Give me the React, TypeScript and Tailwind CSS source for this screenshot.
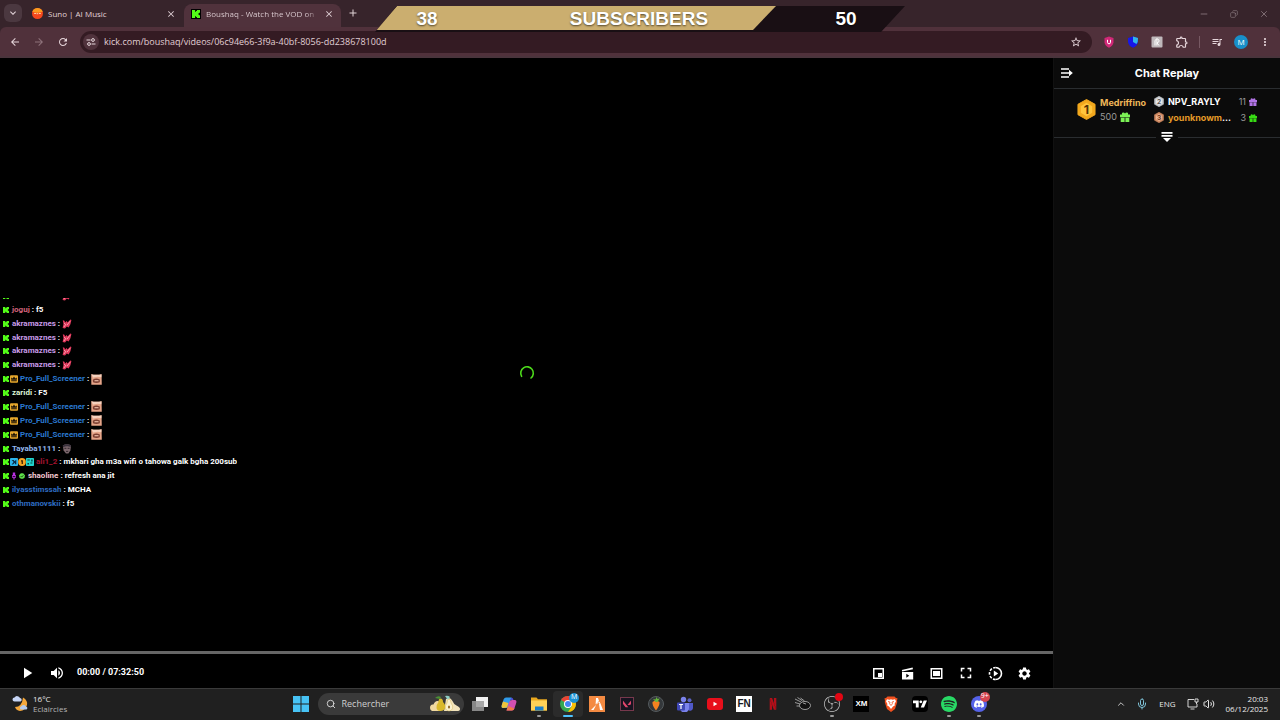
import type { ReactNode } from 'react';
import {
  SiDiscord,
  SiNetflix,
  SiObsstudio,
  SiSpotify,
  SiTradingview,
  SiValorant,
} from 'react-icons/si';
import {
  MdAdd,
  MdArrowBack,
  MdArrowForward,
  MdClose,
  MdExpandMore,
  MdFullscreen,
  MdMoreVert,
  MdOutlineExtension,
  MdOutlineQueueMusic,
  MdPlayArrow,
  MdRefresh,
  MdSettings,
  MdStarBorder,
  MdVolumeUp,
} from 'react-icons/md';
import { ChevronUp, Copy, Mic, Minus, Search, Volume2, X } from 'lucide-react';

type Badge = 'crown' | 'mod' | 'coin' | 'sub' | 'mic' | 'check';
type Emote = 'hands' | 'pig' | 'face';

interface ChatMessage {
  user: string;
  color: string;
  badges?: Badge[];
  text?: string;
  emote?: Emote;
}

const messages: ChatMessage[] = [
  { user: 'akramaznes', color: 'text-[#c79be8]', emote: 'hands' },
  { user: 'joguj', color: 'text-[#d4647c]', text: 'f5' },
  { user: 'akramaznes', color: 'text-[#c79be8]', emote: 'hands' },
  { user: 'akramaznes', color: 'text-[#c79be8]', emote: 'hands' },
  { user: 'akramaznes', color: 'text-[#c79be8]', emote: 'hands' },
  { user: 'akramaznes', color: 'text-[#c79be8]', emote: 'hands' },
  { user: 'Pro_Full_Screener', color: 'text-[#2a78cf]', badges: ['crown'], emote: 'pig' },
  { user: 'zaridi', color: 'text-[#dcf3d4]', text: 'F5' },
  { user: 'Pro_Full_Screener', color: 'text-[#2a78cf]', badges: ['crown'], emote: 'pig' },
  { user: 'Pro_Full_Screener', color: 'text-[#2a78cf]', badges: ['crown'], emote: 'pig' },
  { user: 'Pro_Full_Screener', color: 'text-[#2a78cf]', badges: ['crown'], emote: 'pig' },
  { user: 'Tayaba1111', color: 'text-[#93b8ee]', emote: 'face' },
  {
    user: 'ali1_2',
    color: 'text-[#a3132f]',
    badges: ['mod', 'coin', 'sub'],
    text: 'mkhari gha m3a wifi o tahowa galk bgha 200sub',
  },
  { user: 'shaoline', color: 'text-[#f3c9d2]', badges: ['mic', 'check'], text: 'refresh ana jit' },
  { user: 'ilyasstimssah', color: 'text-[#2e6cc2]', text: 'MCHA' },
  { user: 'othmanovskii', color: 'text-[#2e6cc2]', text: 'f5' },
];

function KickLogo({ className }: { className: string }) {
  return (
    <svg className={className} viewBox="0 0 9 9" fill="#53fc18">
      <path d="M0 0h3.500v2h1V1h1V0H9v3H8v1H7v1h1v1h1v3H5.500V8h-1V7h-1v2H0z" />
    </svg>
  );
}

function BadgeIcon({ type }: { type: Badge }) {
  switch (type) {
    case 'crown':
      return (
        <svg className="size-2" viewBox="0 0 8 8">
          <rect width="8" height="7.4" y=".3" rx="1" fill="#e9a92c" />
          <path d="M1.2 2.4l1.5 1L4 1.6l1.3 1.8 1.5-1v2.4H1.2zM1.2 5.2h5.6v1H1.2z" fill="#1a1206" />
        </svg>
      );
    case 'mod':
      return (
        <svg className="size-2" viewBox="0 0 8 8">
          <rect width="8" height="8" rx="1" fill="#2cb4ea" />
          <path d="M1.6 2h2.2l.6 1.3L6.3 1.8v4.5H5V4.8L3 6.4H1.6l2-2.4z" fill="#0c2c47" />
        </svg>
      );
    case 'coin':
      return (
        <svg className="size-2" viewBox="0 0 8 8">
          <circle cx="4" cy="4" r="3.9" fill="#f3a526" />
          <path d="M3 2.2h1.9v3.9H3.6V3.4H3z" fill="#3a1f02" />
        </svg>
      );
    case 'sub':
      return (
        <svg className="size-2" viewBox="0 0 8 8">
          <rect width="8" height="8" rx=".8" fill="#22d5cf" />
          <path d="M1.4 1.4h2.4v1.2H1.4zM5.2 1.4h1.4v2H5.2zM1.4 5h1.6v1.6H1.4zM4.4 4.6h2v1h-2z" fill="#06413f" />
        </svg>
      );
    case 'mic':
      return (
        <svg className="size-2" viewBox="0 0 8 8">
          <path d="M2.8.6h2.4v3.6H2.8zM2 3h.7v2h2.6V3H6v2.8H4.6v1.6H3.4V5.8H2z" fill="#b92fe0" />
        </svg>
      );
    case 'check':
      return (
        <svg className="size-2" viewBox="0 0 8 8">
          <path d="M4 1l.9.6 1.1.1.3 1 .8.8-.4 1 .1 1.1-1 .4-.8.9-1-.3-1 .3-.8-.9-1-.4.1-1.1-.4-1 .8-.8.3-1L3.1 1.6z" fill="#5fe04a" />
          <path d="M2.7 4.1l1 1 1.7-1.9" stroke="#0a2a06" strokeWidth=".8" fill="none" />
        </svg>
      );
  }
}

function EmoteIcon({ type }: { type: Emote }) {
  if (type === 'hands') {
    return (
      <svg className="size-2.5" viewBox="0 0 10 10">
        <path d="M.8 1.2l1.600.6.8 1.800L4.600 2l1 1.400L8.400.4l1 .6L8.400 5.200 6.600 8.600 4.800 7.400 3 9.600.6 9 1.500 5z" fill="#e0385c" />
        <path d="M2 4.200l1.200.800M5 6.200L8 2.200M2 8l2-3" stroke="#ffb0bd" strokeWidth=".8" />
      </svg>
    );
  }
  if (type === 'pig') {
    return (
      <svg className="size-[11px]" viewBox="0 0 10 10">
        <path d="M.2.3L2.4.7h5L9.6.3l.2 9.400H.3z" fill="#e5a488" />
        <path d="M.2.3L2.4.7h5L9.6.3 9.4 3 6 2.400 2 3.200z" fill="#f5d2bf" />
        <path d="M1.6 5.2q3-2 6.400-.2v2.400q-3 1.400-6.200 0z" fill="#7d4033" />
        <path d="M3.200 5.600h3.600v1H3.200z" fill="#f0c0ab" />
      </svg>
    );
  }
  return (
    <svg className="size-2.5" viewBox="0 0 10 10">
      <path d="M.8 1.5Q5-.8 9 1.4L8.4 6.4 6.4 9.6H4L1.6 6.6z" fill="#7c676d" />
      <path d="M.8 1.5Q5-.8 9 1.4L8.6 3Q5 1.4 1.2 3.2z" fill="#38303b" />
      <path d="M2.4 4.3h2M5.6 4.3h2M4 7.4h2.2" stroke="#1d161c" strokeWidth=".8" />
    </svg>
  );
}

function ChatOverlay() {
  return (
    <div className="absolute bottom-[140px] left-0 flex h-[213px] items-end overflow-hidden pl-[3px] text-[8px] font-bold text-white font-['Roboto',sans-serif]">
      <ul className="grid h-[222px] auto-rows-fr">
        {messages.map((m, i) => (
          <li key={i} className="flex items-center whitespace-pre">
            <KickLogo className="mr-px size-1.5" />
            {m.badges?.map((b) => <BadgeIcon key={b} type={b} />)}
            <span className={`${m.color} ml-0.5`}>{m.user}</span>
            <span> : {m.text}</span>
            {m.emote && <EmoteIcon type={m.emote} />}
          </li>
        ))}
      </ul>
    </div>
  );
}

function TabStrip() {
  return (
    <div className="flex h-[27px] items-end pl-1 text-[8px] text-[#e2d3d8]">
      <button aria-label="Search tabs" className="mb-[5px] flex size-[18px] items-center justify-center rounded-md bg-[#4b3840]">
        <MdExpandMore className="size-3" />
      </button>
      <div className="ml-2.5 flex h-[23px] w-[152px] items-center pb-1">
        <svg className="size-[11px]" viewBox="0 0 10 10">
          <circle cx="5" cy="5" r="5" fill="#f4471d" />
          <path d="M.3 3.400a5 5 0 019.400 0Q5 5.400.3 3.400z" fill="#fb9a1e" />
          <path d="M2 5h1.600M4.200 5.200h1.500M6.400 5h1.600" stroke="#ffd9a8" strokeWidth=".9" />
        </svg>
        <span className="ml-[5px] flex-1">Suno | AI Music</span>
        <button aria-label="Close Suno">
          <MdClose className="mr-2 size-2.5" />
        </button>
      </div>
      <div className="flex h-[23px] w-[157px] items-center rounded-t-lg bg-[#50323c] pb-1 pl-[7px]">
        <span className="flex size-2.5 items-center justify-center bg-black">
          <KickLogo className="size-2" />
        </span>
        <span className="ml-[5px] flex-1 overflow-hidden whitespace-nowrap bg-linear-to-r from-[#e2d3d8] from-90% to-[#e2d3d8]/20 bg-clip-text text-transparent">
          Boushaq - Watch the VOD on K
        </span>
        <button aria-label="Close Boushaq" className="mx-[7px]">
          <MdClose className="size-2.5" />
        </button>
      </div>
      <button aria-label="New tab" className="mb-2 ml-1.5">
        <MdAdd className="size-3" />
      </button>
      <div className="ml-auto flex items-center gap-[21px] pb-2 pr-[11px] text-[#8b7a80]">
        <button aria-label="Minimize"><Minus className="size-2.5" /></button>
        <button aria-label="Restore"><Copy className="size-2 rotate-90" /></button>
        <button aria-label="Close window"><X className="size-2.5" /></button>
      </div>
    </div>
  );
}

function Toolbar() {
  return (
    <div className="flex h-[31px] items-center rounded-t-md border-b-2 border-[#4a343c] bg-[#50313b] text-[#e6d6db]">
      <div className="flex w-20 items-center gap-3 pl-[9px]">
        <button aria-label="Back"><MdArrowBack className="size-3" /></button>
        <button aria-label="Forward" className="text-[#8e727b]"><MdArrowForward className="size-3" /></button>
        <button aria-label="Reload"><MdRefresh className="size-3" /></button>
      </div>
      <div className="flex h-[22px] flex-1 items-center rounded-full bg-[#341b23] pl-[3px] pr-2.5">
        <button aria-label="Site information" className="flex size-4 items-center justify-center rounded-full bg-[#50323c]">
          <svg className="size-2.5" viewBox="0 0 10 10" fill="none" stroke="currentColor" strokeWidth="1">
            <path d="M.5 3h4M5.500 7h4" />
            <circle cx="7" cy="3" r="1.400" />
            <circle cx="3" cy="7" r="1.400" />
          </svg>
        </button>
        <input
          aria-label="Address"
          className="ml-[5px] flex-1 bg-transparent text-[9px] text-[#e0ced4] outline-none"
          defaultValue="kick.com/boushaq/videos/06c94e66-3f9a-40bf-8056-dd238678100d"
        />
        <button aria-label="Bookmark"><MdStarBorder className="size-3" /></button>
      </div>
      <div className="flex items-center gap-3 pl-[11px] pr-[9px]">
        <button aria-label="uBlock">
          <svg className="size-3" viewBox="0 0 12 12">
            <path d="M6 .5l4.500 1.500v4.200Q10 10 6 11.700 2 10 1.500 6.200V2z" fill="#d02877" />
            <path d="M4.500 3.800v2.500a1.500 1.500 0 003 0V3.800" stroke="#fff" strokeWidth="1" fill="none" />
          </svg>
        </button>
        <button aria-label="Shield">
          <svg className="size-3" viewBox="0 0 12 12">
            <path d="M6 .6l5 1.400v4Q10.500 10 6 11.700 1.500 10 1 6V2z" fill="#1717e8" />
            <path d="M6 .6l5 1.400q.2 4-1.500 6L6 6z" fill="#31b5e8" />
          </svg>
        </button>
        <button aria-label="Coupons">
          <svg className="size-3" viewBox="0 0 12 12">
            <rect x=".5" y=".5" width="11" height="11" rx="1" fill="#bfb8bb" />
            <path d="M4 9.500V4.400L6 2.600l2 1.600v1.400L6 7l2 2.500M5.900 2.800v6.700" stroke="#fff" strokeWidth="1" fill="none" />
          </svg>
        </button>
        <button aria-label="Extensions"><MdOutlineExtension className="size-3.5" /></button>
        <div className="-ml-0.5 flex items-center gap-[11px]">
          <span className="h-3 w-px bg-[#775963]" />
          <button aria-label="Media"><MdOutlineQueueMusic className="size-3" /></button>
          <button aria-label="Profile" className="flex size-3.5 items-center justify-center rounded-full bg-[#188fc9] text-[8px] text-white">
            M
          </button>
          <button aria-label="Menu"><MdMoreVert className="size-3" /></button>
        </div>
      </div>
    </div>
  );
}

// Stream widget pinned above the browser chrome
function SubscriberGoal() {
  return (
    <div className="pointer-events-none absolute inset-x-0 top-1.5 flex justify-center">
      <div className="relative grid h-[26px] w-[530px] grid-cols-[104px_1fr_122px] items-center bg-[#190f14] pb-px text-center text-[19px] font-bold leading-6 text-white font-['Liberation_Sans',sans-serif] [clip-path:polygon(22px_0,100%_0,506px_100%,0_100%)] [text-shadow:0_1px_2px_#0009]">
        <div className="absolute inset-x-0 top-0 h-6 bg-[#cbae6f] [clip-path:polygon(22px_0,401px_0,378px_100%,0_100%)]" />
        <span className="relative">38</span>
        <span className="relative pl-4">SUBSCRIBERS</span>
        <span className="relative pl-1">50</span>
      </div>
    </div>
  );
}

function Player() {
  return (
    <section className="flex flex-1 flex-col bg-black">
      <div className="relative flex flex-1 items-center justify-center">
        <svg className="mt-9 size-4" viewBox="0 0 16 16">
          <path d="M2.600 11.300A6.300 6.300 0 1112 13" fill="none" stroke="#4ddb1b" strokeWidth="1.600" strokeLinecap="round" />
        </svg>
        <ChatOverlay />
      </div>
      <input
        type="range"
        aria-label="Seek"
        defaultValue={0}
        className="h-[3px] w-full appearance-none bg-[#666] [&::-webkit-slider-thumb]:size-0 [&::-webkit-slider-thumb]:appearance-none"
      />
      <div className="flex h-[34px] items-center pl-[18px] pr-[21px] pt-1 text-white">
        <button aria-label="Play"><MdPlayArrow className="size-[18px]" /></button>
        <button aria-label="Volume" className="ml-[13px]"><MdVolumeUp className="size-4" /></button>
        <span className="ml-3 text-[9px] font-bold font-['Roboto',sans-serif]">00:00 / 07:32:50</span>
        <div className="ml-auto flex items-center gap-[14px]">
          <button aria-label="Mini player">
            <svg className="size-[15px]" viewBox="0 0 15 15">
              <path d="M2 2h11v11H2zM3.500 3.500v8h8v-8z" fill="currentColor" fillRule="evenodd" />
              <path d="M7 7h4v4H7z" fill="currentColor" />
            </svg>
          </button>
          <button aria-label="Clip">
            <svg className="size-[15px]" viewBox="0 0 15 15" fill="currentColor">
              <path d="M1.800 4L12.600 1.500l.4 1.800L2.200 5.600z" />
              <path d="M2 6h11.200v7.500H2zM6.300 7.800v4l3-2z" fillRule="evenodd" />
            </svg>
          </button>
          <button aria-label="Theatre mode">
            <svg className="size-[15px]" viewBox="0 0 15 15" fill="currentColor">
              <path d="M1.500 2h12v11h-12zM3 3.500v8h9v-8z" fillRule="evenodd" />
              <path d="M4 5h7v5H4z" />
            </svg>
          </button>
          <button aria-label="Fullscreen"><MdFullscreen className="size-[18px] -mx-px" /></button>
          <button aria-label="Speed">
            <svg className="size-[15px]" viewBox="0 0 15 15">
              <path d="M7.500 1.500a6 6 0 010 12" fill="none" stroke="currentColor" strokeWidth="1.600" />
              <path d="M7.500 13.500a6 6 0 010-12" fill="none" stroke="currentColor" strokeWidth="1.600" strokeDasharray="2.600 1.400" />
              <path d="M5.800 4.500v6l4.400-3z" fill="currentColor" />
            </svg>
          </button>
          <button aria-label="Settings"><MdSettings className="size-[15px]" /></button>
        </div>
      </div>
    </section>
  );
}

interface HexagonProps {
  className: string;
  rank: number;
  fill: string;
  inner: string;
  ink: string;
}

function Hexagon({ className, rank, fill, inner, ink }: HexagonProps) {
  return (
    <svg className={className} viewBox="0 0 20 22">
      <path d="M10 .5l9 5v11l-9 5-9-5v-11z" fill={fill} stroke={fill} strokeLinejoin="round" />
      <path d="M10 4l6 3.500v7L10 18l-6-3.500v-7z" fill={inner} />
      <text x="10" y="15.500" textAnchor="middle" fontSize="13" fontWeight="700" fill={ink}>{rank}</text>
    </svg>
  );
}

function Gift({ className }: { className: string }) {
  return (
    <svg className={className} viewBox="0 0 10 10" fill="currentColor">
      <path d="M0 2.500h2Q1.500 1 2.700.5 4.300.2 5 1.600 5.700.2 7.300.5 8.500 1 8 2.500h2v2.700H0zM.7 5.700h3.900V10H.7zM5.400 5.700h3.900V10H5.400z" />
    </svg>
  );
}

function ChatPanel() {
  return (
    <aside className="flex w-[227px] flex-col border-l border-[#111] bg-[#0b0b0b] text-white">
      <header className="grid h-[31px] grid-cols-[1fr_auto_1fr] items-center border-b border-[#2a2d30] pl-1.5">
        <button aria-label="Collapse chat" className="justify-self-start">
          <svg className="size-3.5" viewBox="0 0 14 14">
            <path d="M1 3h8M1 7h10M1 11h8" stroke="currentColor" strokeWidth="1.600" />
            <path d="M9 3.800L12.800 7 9 10.200z" fill="currentColor" />
          </svg>
        </button>
        <h1 className="pr-1.5 text-[11px] font-bold">Chat Replay</h1>
      </header>
      <div className="flex h-11 items-center pb-[3px] pl-[23px] pr-[23px] text-[9px] font-bold leading-4">
        <Hexagon className="h-[21px] w-[19px]" rank={1} fill="#f2a81d" inner="#ffc53d" ink="#553204" />
        <div className="ml-1 w-[54px] leading-[14px]">
          <p className="text-[#eeb659]">Medriffino</p>
          <p className="flex items-center gap-[3px] font-normal text-[#9a9a9a]">
            500 <Gift className="size-2.5 text-[#7bf255]" />
          </p>
        </div>
        <ul className="flex-1">
          <li className="flex items-center">
            <Hexagon className="h-[11px] w-2.5" rank={2} fill="#c9ccd0" inner="#e6e8ea" ink="#555" />
            <span className="ml-1">NPV_RAYLY</span>
            <span className="ml-auto font-normal text-[#9a9a9a]">11</span>
            <Gift className="ml-[3px] size-2 text-[#b274e6]" />
          </li>
          <li className="flex items-center">
            <Hexagon className="h-[11px] w-2.5" rank={3} fill="#d08a63" inner="#eab392" ink="#6b3216" />
            <span className="ml-1 whitespace-nowrap"><span className="text-[#e59a28]">younknowm</span>...</span>
            <span className="ml-auto font-normal text-[#9a9a9a]">3</span>
            <Gift className="ml-[3px] size-2 text-[#38dd14]" />
          </li>
        </ul>
      </div>
      <div className="flex h-2 items-center gap-1">
        <span className="h-px flex-1 bg-[#2a2d30]" />
        <button aria-label="Expand leaderboard">
          <svg className="size-3.5" viewBox="0 0 14 14" fill="currentColor">
            <path d="M1.500 2h11v1.700h-11zM1.500 5h11v1.700h-11zM3 8h8L7 12z" />
          </svg>
        </button>
        <span className="h-px flex-1 bg-[#2a2d30]" />
      </div>
    </aside>
  );
}

function BraveLogo() {
  return (
    <svg viewBox="0 0 16 16" className="size-4">
      <path d="M4.500.5h7L13 2l1.500.2L14 5l.3 1-2.300 7L8 16l-4-3-2.300-7L2 5l-.5-2.800L3 2z" fill="#f1511f" />
      <path d="M4 3.200l2.500.5L8 3.300l1.500.4 2.500-.5 1 2L11.500 8l.5 1.200-2 1.300L8 13l-2-2.500-2-1.300L4.500 8 3 5.200z" fill="#fff" />
      <path d="M5 5.500l2 .6-.4 1.700L8 9.500l1.400-1.700L9 6.100l2-.6" stroke="#f1511f" strokeWidth=".8" fill="none" />
    </svg>
  );
}

const apps: { name: string; icon: ReactNode; running?: boolean; active?: boolean }[] = [
  {
    name: 'Task view',
    icon: (
      <svg viewBox="0 0 16 16" className="size-4">
        <rect x="4" y="1" width="12" height="10" fill="#f1f1f1" />
        <rect x="0" y="5" width="12" height="10" fill="#9a9a9a" opacity=".85" />
      </svg>
    ),
  },
  {
    name: 'Copilot',
    icon: (
      <svg viewBox="0 0 16 16" className="size-4">
        <path d="M5 1.500h5.500L8 9.500Q7.200 12 5 12H2Q0 12 .8 9L2.600 3.500Q3.300 1.500 5 1.500z" fill="#2f9bea" />
        <path d="M.8 9L2 5.500 7.500 7 6 11.500 2 12Q0 12 .8 9z" fill="#f0c43a" />
        <path d="M11 14.500H5.500L8 6.500Q8.800 4 11 4h3q2 0 1.200 3l-1.800 5.500q-.7 2-2.400 2z" fill="#d34fb0" />
        <path d="M11 14.500H5.500L7 10l6.400 2.500q-.7 2-2.400 2z" fill="#f17846" />
        <path d="M10.500 1.500Q12 1.500 12.500 4H9z" fill="#4d4fd6" />
      </svg>
    ),
  },
  {
    name: 'Explorer',
    running: true,
    icon: (
      <svg viewBox="0 0 16 16" className="size-4">
        <path d="M0 1.500h5.500L7 3.200h9v11.300H0z" fill="#e9a81f" />
        <path d="M0 4.500h16v10H0z" fill="#ffd257" />
        <path d="M4 10.500h8.500v4H4z" fill="#1b7fc9" />
      </svg>
    ),
  },
  {
    name: 'Chrome',
    running: true,
    active: true,
    icon: (
      <span className="relative">
        <svg viewBox="0 0 16 16" className="size-4">
          <circle cx="8" cy="8" r="8" fill="#34a853" />
          <path d="M8 8L1.100 4a8 8 0 0113.800 0z" fill="#ea4335" />
          <path d="M8 8l6.900-4a8 8 0 01-6.900 12l4-6z" fill="#fbbc05" />
          <circle cx="8" cy="8" r="4" fill="#fff" />
          <circle cx="8" cy="8" r="3" fill="#4285f4" />
        </svg>
        <span className="absolute -right-[3px] -top-[3px] flex size-2.5 items-center justify-center rounded-full bg-[#1a92d4] text-[7px] text-white">
          M
        </span>
      </span>
    ),
  },
  {
    name: 'FiveM',
    icon: (
      <svg viewBox="0 0 16 16" className="size-4">
        <rect width="16" height="16" fill="#f48a42" />
        <path d="M7 2h2l1 3-3.400 3.500zM6 10l4.500-4.500L11.500 8 8.500 6.500 4.500 14H2zM10 8l1.500-.5L14 14h-3z" fill="#fff" />
      </svg>
    ),
  },
  {
    name: 'Valorant',
    icon: (
      <span className="flex size-3.5 items-center justify-center border border-[#76384c] bg-[#171420]">
        <SiValorant className="size-2 text-[#e0466c]" />
      </span>
    ),
  },
  {
    name: 'FL Studio',
    icon: (
      <svg viewBox="0 0 16 16" className="size-4">
        <circle cx="8" cy="8" r="7.500" fill="#33373a" stroke="#555b5e" />
        <path d="M4.500 6q3.500-3 7 0 .5 3-3.500 8.500Q4 9.500 4.500 6z" fill="#f58220" />
        <path d="M7.800 6L5 3l2.500.5L8.500 1l1 2 2.300-.8L9.500 6z" fill="#69b53c" />
      </svg>
    ),
  },
  {
    name: 'Teams',
    icon: (
      <svg viewBox="0 0 16 16" className="size-4">
        <circle cx="6.500" cy="3.500" r="2.700" fill="#7b83eb" />
        <circle cx="12.500" cy="4.300" r="2" fill="#5a62c3" />
        <path d="M10 7h6v4.500a3 3 0 01-5 2.500z" fill="#5059c9" />
        <path d="M3 7h9v5a4.200 4.200 0 01-9 0z" fill="#7b83eb" />
        <rect x="0" y="6.500" width="8" height="8" rx="1" fill="#4048b5" />
        <path d="M2 8.500h4M4 8.500v4.500" stroke="#fff" strokeWidth="1.200" />
      </svg>
    ),
  },
  {
    name: 'YouTube',
    icon: (
      <svg viewBox="0 0 16 12" className="h-3 w-4">
        <rect width="16" height="12" rx="3" fill="#e80f1b" />
        <path d="M6.500 3.800v4.400L10.300 6z" fill="#fff" />
      </svg>
    ),
  },
  {
    name: 'FN',
    icon: (
      <span className="flex size-4 items-center justify-center bg-white text-[10px] font-bold text-[#16181d] font-['Liberation_Sans',sans-serif]">
        FN
      </span>
    ),
  },
  { name: 'Netflix', icon: <SiNetflix className="size-3 text-[#b40f19]" /> },
  {
    name: 'Meteor',
    icon: (
      <svg viewBox="0 0 18 14" className="h-3.5 w-[18px]" fill="none" stroke="#b9b9b9" strokeWidth=".8">
        <ellipse cx="11" cy="8.500" rx="5.500" ry="4" fill="#111" />
        <path d="M1 2l6 3M3.500.5L8.500 4M1 5.500l5 1.500M6.500 1l4 3M2.500 9h3M9 6l3 1" />
      </svg>
    ),
  },
  {
    name: 'OBS',
    running: true,
    icon: (
      <span className="relative">
        <SiObsstudio className="size-4 text-[#c4c4c4]" />
        <span className="absolute -right-[3px] -top-[3px] size-2 rounded-full bg-[#e30613]" />
      </span>
    ),
  },
  {
    name: 'XM',
    icon: (
      <span className="flex size-4 items-center justify-center bg-black text-[8px] font-bold text-white font-['Liberation_Sans',sans-serif]">
        XM
      </span>
    ),
  },
  { name: 'Brave', icon: <BraveLogo /> },
  {
    name: 'TradingView',
    icon: (
      <span className="flex size-4 items-center justify-center rounded-sm bg-black">
        <SiTradingview className="size-3.5 text-white" />
      </span>
    ),
  },
  { name: 'Spotify', running: true, icon: <SiSpotify className="size-4 text-[#28d865]" /> },
  {
    name: 'Discord',
    running: true,
    icon: (
      <span className="relative flex size-4 items-center justify-center rounded-full bg-[#5562e8]">
        <SiDiscord className="size-2.5 text-white" />
        <span className="absolute -right-[3px] -top-1 flex size-2.5 items-center justify-center rounded-full bg-[#d64550] text-[7px] text-white">
          9+
        </span>
      </span>
    ),
  },
];

function Pears() {
  return (
    <svg className="h-[17px] w-[32px]" viewBox="0 0 32 17">
      <path d="M1 13Q1 9 4.500 9.500 6 5.500 9 6t3 4v6H3q-2-1-2-3z" fill="#f0d9a0" />
      <path d="M17 4q4-3 6.500 2 1 3 4 4.500 4 2 3.500 4T28 16H15z" fill="#f2e3bb" />
      <path d="M16 1q3-1 5 1l-2 3z" fill="#8fcfc4" />
      <path d="M11.500 3.500Q14 3.500 14 7q3 3 2 6-1 3-4.500 3T7.500 13q-.5-3 2-6 0-3.500 2-3.500z" fill="#d9b92c" />
      <path d="M20 4q2 .5 2 4 2.500 3 1.500 5.500T20 16t-3.500-2.500T18 8q0-3.500 2-4z" fill="#fbf2cf" stroke="#d4b65b" strokeWidth=".5" />
      <ellipse cx="20" cy="12" rx="1" ry="1.600" fill="#8d6422" />
      <path d="M6 3q3-3 6-1l-1 2z" fill="#4a8f35" />
    </svg>
  );
}

function Taskbar() {
  return (
    <footer className="grid h-8 grid-cols-[1fr_auto_1fr] items-center border-t border-[#3a3a3a] bg-[#202020] pb-0.5 text-[8px] text-[#e8e8e8]">
      <div className="flex items-center gap-1 pl-3">
        <svg className="size-[17px]" viewBox="0 0 17 17">
          <path d="M11 2.500q5 3 4 7.500-1.500 5.500-7 6-4-.5-5-4 7 0 8-9.500z" fill="#f5a83b" />
          <path d="M2.500 6.500a2 2 0 010-4Q4 0 6.500 1.500q1.500 1 1.500 1.500a1.800 1.800 0 01.5 3.500z" fill="#c6d5f5" />
          <path d="M9 14.500a1.600 1.600 0 010-3q1-2 3-1.500 1.500.3 2 1.500a1.600 1.600 0 01.5 3z" fill="#b4cbee" />
        </svg>
        <div className="leading-[10px]">
          <p>16°C</p>
          <p className="text-[#b5b5b5]">Eclaircies</p>
        </div>
      </div>
      <nav className="flex items-center">
        <button aria-label="Start" className="flex w-[29px] justify-center">
          <svg className="size-4" viewBox="0 0 16 16" fill="#47c3f5">
            <path d="M0 0h7.500v7.500H0zM8.500 0H16v7.500H8.500zM0 8.500h7.500V16H0zM8.500 8.500H16V16H8.500z" />
          </svg>
        </button>
        <label className="mx-0.5 flex h-[22px] w-[146px] items-center rounded-full bg-[#3a3a3a] pl-2 pr-[3px]">
          <Search className="size-2.5 shrink-0" />
          <input
            aria-label="Rechercher"
            placeholder="Rechercher"
            className="ml-1.5 min-w-0 flex-1 bg-transparent text-[9px] outline-none placeholder:text-[#cfcfcf]"
          />
          <Pears />
        </label>
        <div className="flex w-[528px] items-center">
          {apps.map((app) => (
            <button
              key={app.name}
              aria-label={app.name}
              className={`relative flex h-[26px] flex-1 items-center justify-center rounded ${app.active ? 'bg-[#2b2b2b]' : ''}`}
            >
              {app.icon}
              {app.running && (
                <span className={`absolute bottom-0 h-0.5 rounded-full ${app.active ? 'w-2.5 bg-[#4cc2ff]' : 'w-1 bg-[#9a9a9a]'}`} />
              )}
            </button>
          ))}
        </div>
      </nav>
      <div className="flex items-center justify-end pr-3">
        <ChevronUp className="size-2.5" />
        <Mic className="ml-2.5 size-3 text-[#7fc3d8]" />
        <span className="ml-[11px]">ENG</span>
        <svg className="ml-[11px] size-3" viewBox="0 0 12 12" fill="none" stroke="currentColor" strokeWidth=".9">
          <path d="M7 1.500H1v7.500h9V6M3.500 11h4M8 1h3v3H8zM9.500 4v2" />
        </svg>
        <Volume2 className="ml-1 size-3" />
        <div className="ml-[11px] text-right leading-[10px]">
          <p>20:03</p>
          <p>06/12/2025</p>
        </div>
      </div>
    </footer>
  );
}

export default function App() {
  return (
    <div className="relative flex min-h-screen flex-col bg-[#37242b] font-['Open_Sans',sans-serif]">
      <TabStrip />
      <Toolbar />
      <SubscriberGoal />
      <main className="flex flex-1 font-['Inter',sans-serif]">
        <Player />
        <ChatPanel />
      </main>
      <Taskbar />
    </div>
  );
}
